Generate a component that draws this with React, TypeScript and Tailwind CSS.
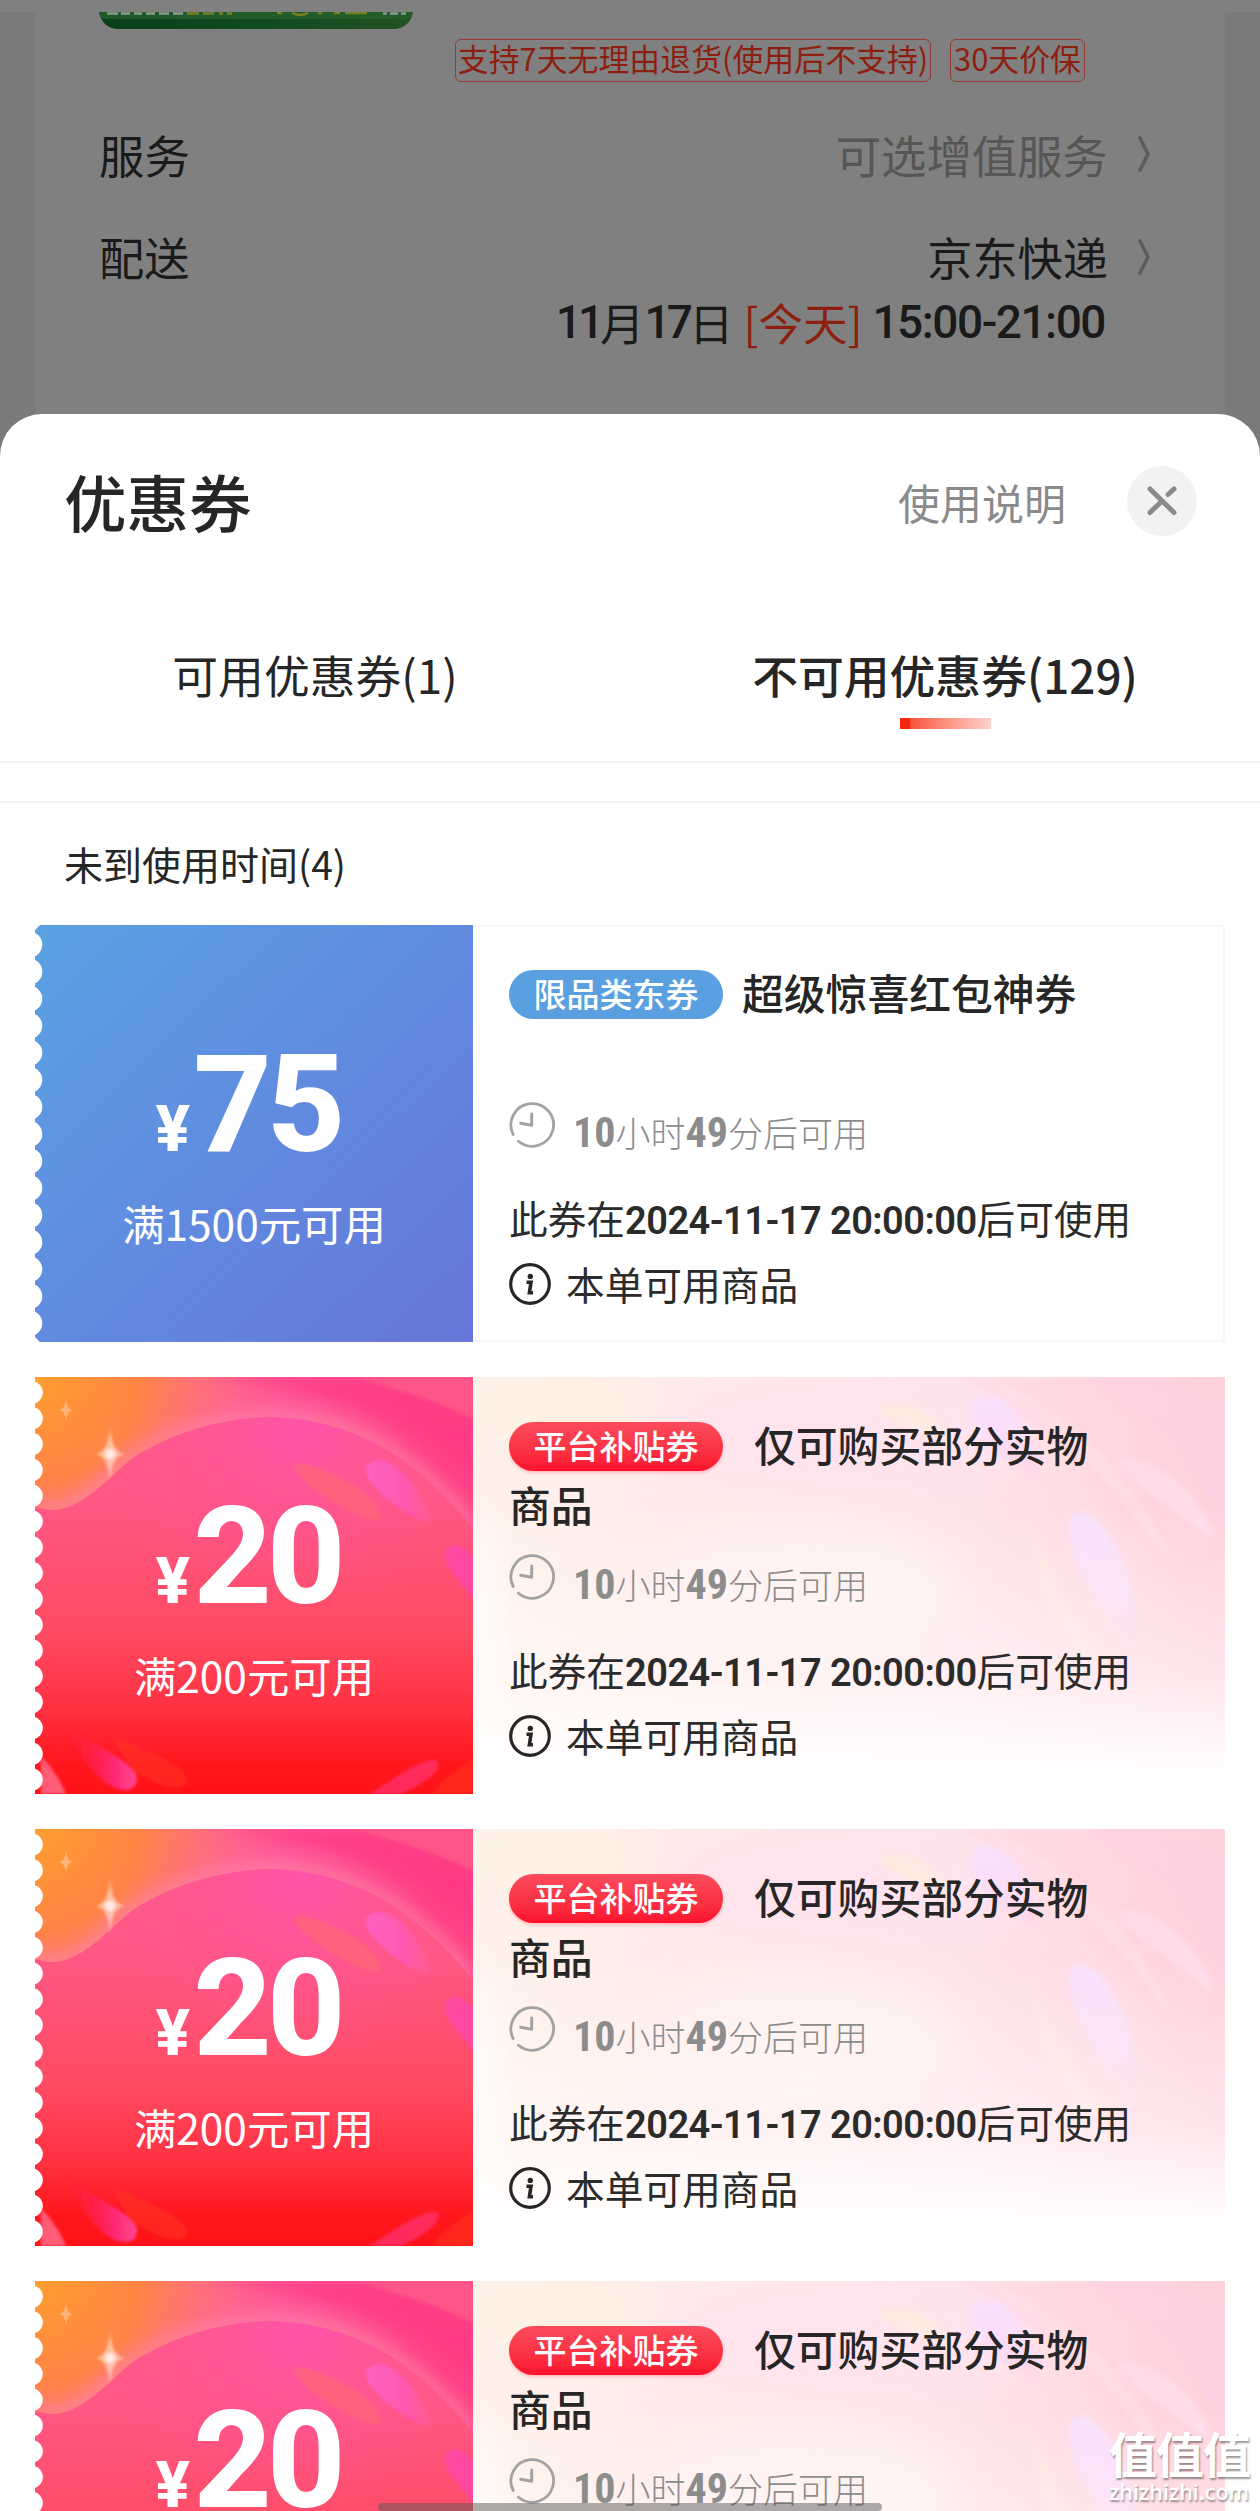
import { ReactNode } from 'react'

const COUPONS = [
  { id: 1, type: 'category', tag: '限品类东券', title: '超级惊喜红包神券', amount: 75, threshold: 1500 },
  { id: 2, type: 'subsidy', tag: '平台补贴券', title: '仅可购买部分实物商品', amount: 20, threshold: 200 },
  { id: 3, type: 'subsidy', tag: '平台补贴券', title: '仅可购买部分实物商品', amount: 20, threshold: 200 },
  { id: 4, type: 'subsidy', tag: '平台补贴券', title: '仅可购买部分实物商品', amount: 20, threshold: 200 },
]

type Coupon = (typeof COUPONS)[number]

// Digits used for times and dates
function Num({ children, className = '' }: { children: ReactNode; className?: string }) {
  return <span className={`font-['Roboto'] ${className}`}>{children}</span>
}

function ArrowRight() {
  return (
    <svg className="w-4 h-9 ml-[28px] shrink-0" viewBox="0 0 16 36" fill="none" stroke="#5c5c5c" strokeWidth="3.6" strokeLinecap="round" strokeLinejoin="round">
      <path d="M4 2 12 18 4 34" />
    </svg>
  )
}

function ClockIcon() {
  return (
    <svg className="w-[46px] h-[46px] shrink-0" viewBox="0 0 46 46" fill="none" stroke="#a3a3a3" strokeWidth="2.8" strokeLinecap="round" strokeLinejoin="round">
      <path d="M4.2 32.5A21.3 21.3 0 1 1 9.5 39.2" />
      <path d="M22.7 12v11.2l-11-2" strokeWidth="3" />
    </svg>
  )
}

function InfoIcon() {
  return (
    <svg className="w-[42px] h-[42px] shrink-0" viewBox="0 0 42 42" fill="none" stroke="#262626">
      <circle cx="21" cy="21" r="19.3" strokeWidth="3.2" />
      <circle cx="21.3" cy="13.4" r="2.7" fill="#262626" stroke="none" />
      <path d="M17.5 19.2H22l-1.6 10.6H24" strokeWidth="3.6" />
    </svg>
  )
}

function CloseIcon() {
  return (
    <svg className="w-[70px] h-[70px]" viewBox="0 0 70 70" fill="none" stroke="#8a8a8a" strokeWidth="5" strokeLinecap="round">
      <path d="M23 23 47 46.5M23 46.5 34.5 35.5M41 28.5 47 23" />
    </svg>
  )
}

function BlueArt() {
  return (
    <svg className="absolute inset-0 w-full h-full" viewBox="0 0 438 417">
      <defs>
        <linearGradient id="blue" x1="0" y1="0" x2="1" y2="1">
          <stop offset="0" stopColor="#5aa2e2" />
          <stop offset="0.55" stopColor="#6189df" />
          <stop offset="1" stopColor="#6775d9" />
        </linearGradient>
      </defs>
      <rect width="438" height="417" fill="url(#blue)" />
      {Array.from({ length: 15 }, (_, i) => (
        <circle key={i} cx="-5.5" cy={19.6 + i * 27.05} r="12.8" fill="#fff" />
      ))}
      <path d="M0 0h5L0 5zM0 417h5l-5-5z" fill="#fff" />
    </svg>
  )
}

function RedArt() {
  return (
    <svg className="absolute inset-0 w-full h-full" viewBox="0 0 438 417">
      <defs>
        <linearGradient id="red" x1="0" y1="0" x2="0" y2="1">
          <stop offset="0" stopColor="#ff5c94" />
          <stop offset="0.3" stopColor="#ff5884" />
          <stop offset="0.62" stopColor="#ff4a62" />
          <stop offset="0.8" stopColor="#ff3040" />
          <stop offset="0.93" stopColor="#ff161c" />
          <stop offset="1" stopColor="#ff1216" />
        </linearGradient>
        <linearGradient id="band" x1="0" y1="0" x2="1" y2="0.3">
          <stop offset="0" stopColor="#ff8250" />
          <stop offset="0.3" stopColor="#ff7480" />
          <stop offset="0.55" stopColor="#ff5a9a" />
          <stop offset="1" stopColor="#ff4286" />
        </linearGradient>
        <radialGradient id="orange" cx="0" cy="0" r="0.48">
          <stop offset="0" stopColor="#ff9e30" />
          <stop offset="0.5" stopColor="#ff8640" stopOpacity="0.9" />
          <stop offset="1" stopColor="#ff6a80" stopOpacity="0" />
        </radialGradient>
        <radialGradient id="glow" cx="0.6" cy="0.12" r="0.45">
          <stop offset="0" stopColor="#ff54aa" />
          <stop offset="1" stopColor="#ff5488" stopOpacity="0" />
        </radialGradient>
        <linearGradient id="petal" x1="0" y1="0" x2="1" y2="0">
          <stop offset="0" stopColor="#ff62c0" />
          <stop offset="0.6" stopColor="#ff58b0" />
          <stop offset="1" stopColor="#ff60a0" stopOpacity="0.4" />
        </linearGradient>
        <linearGradient id="petalLow" x1="0" y1="0" x2="1" y2="0">
          <stop offset="0" stopColor="#ff1c40" stopOpacity="0.1" />
          <stop offset="0.7" stopColor="#ff2a78" />
          <stop offset="1" stopColor="#ff4a90" />
        </linearGradient>
        <filter id="soft1" x="-20%" y="-20%" width="140%" height="140%"><feGaussianBlur stdDeviation="1.5" /></filter>
        <filter id="soft6" x="-20%" y="-20%" width="140%" height="140%"><feGaussianBlur stdDeviation="7" /></filter>
        <clipPath id="outer">
          <path d="M0 0H438V152C412 118 380 88 340 66C300 46 262 40 232 40C180 42 130 58 95 83C70 104 45 134 15 133L0 130Z" />
        </clipPath>
      </defs>
      <rect width="438" height="417" fill="url(#red)" />
      <rect width="438" height="417" fill="url(#glow)" />
      <g clipPath="url(#outer)">
        <rect width="438" height="160" fill="url(#band)" />
        <path d="M145 0C250 8 350 20 438 100V40C400 16 360 4 320 0Z" fill="#ff3a82" fillOpacity="0.8" filter="url(#soft6)" />
        <path d="M320 0C360 12 400 22 438 42V0Z" fill="#ff5488" filter="url(#soft1)" />
        <rect width="438" height="417" fill="url(#orange)" />
        <path d="M438 152C412 118 380 88 340 66C300 46 262 40 232 40C180 42 130 58 95 83C70 104 45 134 15 133L0 130" fill="none" stroke="#ff86a6" strokeWidth="18" strokeOpacity="0.6" filter="url(#soft6)" />
      </g>
      <g filter="url(#soft1)">
        <path d="M258 88C275 80 352 118 344 142C336 150 262 108 258 88Z" fill="#ff6478" fillOpacity="0.85" />
        <path d="M331 90C344 72 370 92 384 116C400 142 398 146 388 144C372 140 326 106 331 90Z" fill="url(#petal)" />
        <path d="M411 172C418 164 432 170 440 182V224C428 208 404 186 411 172Z" fill="#ff48a6" fillOpacity="0.9" />
        <path d="M32 345C40 362 96 380 102 400C102 420 80 414 66 402C48 386 36 366 32 345Z" fill="url(#petalLow)" />
        <path d="M76 356C100 372 156 386 152 406C140 418 112 402 96 392Z" fill="#ff3a24" fillOpacity="0.45" />
        <path d="M334 417C350 408 392 376 403 384C408 398 376 412 366 417Z" fill="#ff2c62" fillOpacity="0.9" />
        <path d="M438 382C424 390 404 406 398 417H438Z" fill="#ff3420" fillOpacity="0.6" />
        <path d="M6 380C14 386 26 404 31 417H6Z" fill="#ff5c78" />
      </g>
      <g fill="#fff">
        <path d="M75 48Q76 76 90 77Q76 78 75 106Q74 78 60 77Q74 76 75 48Z" fillOpacity="0.5" filter="url(#soft1)" />
        <circle cx="75" cy="77" r="5" fillOpacity="0.7" filter="url(#soft1)" />
        <path d="M31 22Q32 32 38 33Q32 34 31 44Q30 34 24 33Q30 32 31 22Z" fillOpacity="0.3" />
      </g>
      {Array.from({ length: 16 }, (_, i) => (
        <circle key={i} cx="-3.5" cy={15.5 + i * 25.8} r="11.3" fill="#fff" />
      ))}
    </svg>
  )
}

function PinkArt() {
  return (
    <svg className="absolute inset-0 w-full h-full" viewBox="0 0 752 417" preserveAspectRatio="none">
      <defs>
        <linearGradient id="pink" x1="0" y1="0" x2="1" y2="0">
          <stop offset="0" stopColor="#fff2ea" />
          <stop offset="0.3" stopColor="#ffeae9" />
          <stop offset="0.65" stopColor="#ffe4ea" />
          <stop offset="1" stopColor="#ffd2dc" />
        </linearGradient>
        <linearGradient id="fade" x1="0" y1="0" x2="0" y2="1">
          <stop offset="0.3" stopColor="#fff" stopOpacity="0" />
          <stop offset="0.72" stopColor="#fff" stopOpacity="0.45" />
          <stop offset="0.96" stopColor="#fff" />
        </linearGradient>
        <linearGradient id="lilac" x1="0" y1="0" x2="0" y2="1">
          <stop offset="0" stopColor="#f9e2fe" />
          <stop offset="0.6" stopColor="#fcdcf6" />
          <stop offset="1" stopColor="#ffd0e4" stopOpacity="0.4" />
        </linearGradient>
        <filter id="soft3" x="-20%" y="-20%" width="140%" height="140%"><feGaussianBlur stdDeviation="3" /></filter>
        <filter id="soft20" x="-40%" y="-60%" width="180%" height="220%"><feGaussianBlur stdDeviation="22" /></filter>
      </defs>
      <rect width="752" height="417" fill="url(#pink)" />
      <ellipse cx="380" cy="60" rx="190" ry="50" fill="#ffe3ee" filter="url(#soft20)" />
      <ellipse cx="90" cy="30" rx="90" ry="20" fill="#fff3e0" filter="url(#soft20)" />
      <ellipse cx="330" cy="210" rx="150" ry="70" fill="#fff0ef" filter="url(#soft20)" />
      <ellipse cx="-10" cy="260" rx="26" ry="120" fill="#fff" filter="url(#soft20)" />
      <g filter="url(#soft3)">
        <path d="M490 0C600 60 690 170 752 330V0Z" fill="#ffcfdd" fillOpacity="0.4" />
        <path d="M520 0C610 46 670 110 700 190C650 120 590 50 500 0Z" fill="#ffe6ec" fillOpacity="0.5" />
        <path d="M610 0C690 40 730 90 752 160V30C720 14 690 4 670 0Z" fill="#ffd0e4" fillOpacity="0.7" />
        <path d="M640 80C690 80 730 120 742 165C700 130 660 110 640 80Z" fill="#ffdcea" />
        <path d="M407 28C430 16 470 38 476 66C450 56 410 48 407 28Z" fill="#ffeae2" />
        <path d="M499 30C502 10 530 12 548 44C566 76 574 96 562 100C540 90 494 60 499 30Z" fill="url(#lilac)" />
        <path d="M597 142C606 124 636 146 650 184C664 224 670 260 660 276C640 246 588 180 597 142Z" fill="url(#lilac)" />
        <path d="M555 140C570 180 600 250 640 300C590 270 560 210 555 140Z" fill="#ffe8e0" fillOpacity="0.6" />
      </g>
      <rect width="752" height="417" fill="url(#fade)" />
    </svg>
  )
}

function CouponCard({ coupon }: { coupon: Coupon }) {
  const subsidy = coupon.type === 'subsidy'

  return (
    <div className="flex h-[417px] shrink-0">
      {/* Amount */}
      <div className="relative w-[438px] shrink-0">
        {subsidy ? <RedArt /> : <BlueArt />}
        <div className="relative flex flex-col items-center text-white pt-[112px]">
          <div className="flex items-baseline h-[136px] mr-3 leading-[136px] font-['Roboto'] font-extrabold">
            <span className="w-[38px] text-[64px]">¥</span>
            <span className="text-[136px] tracking-[-5px]">{coupon.amount}</span>
          </div>
          <div className="mt-[20px] text-[42.4px] leading-[60px]">满{coupon.threshold}元可用</div>
        </div>
      </div>

      {/* Details */}
      <div className={`relative flex-1 ${subsidy ? '' : 'border-2 border-l-0 border-[#f7f7f7]'}`}>
        {subsidy && <PinkArt />}
        <div className={`relative pl-9 ${subsidy ? 'pt-[37px]' : 'pt-[35px]'}`}>
          <div className="w-[615px] h-[120px] text-[41.8px] leading-[60px] font-medium text-[#262626]">
            <span
              className={`inline-block text-center align-middle w-[214px] h-[49px] -mt-2 rounded-full text-[33px] leading-[47px] text-white ${
                subsidy ? 'mr-[31px] bg-linear-to-b from-[#fb4a5c] to-[#fb0f2c] shadow-[0_2px_3px_rgba(250,30,60,0.25)]' : 'mr-[19px] bg-[#5a9fe0]'
              }`}
            >
              {coupon.tag}
            </span>
            {coupon.title}
          </div>
          <div className="mt-[20px] flex h-[46px] text-[#8c8c8c]">
            <ClockIcon />
            <div className="ml-[18px] pt-[5px] text-[35px] leading-[50px] font-light">
              <Num className="text-[42px] font-bold font-stretch-75%">10</Num>小时
              <Num className="text-[42px] font-bold font-stretch-75%">49</Num>分后可用
            </div>
          </div>
          <div className="mt-[44px] text-[38.7px] leading-[50px] text-[#2b2b2b]">
            此券在<Num className="text-[38px] font-semibold tracking-[-0.55px]">2024-11-17 20:00:00</Num>后可使用
          </div>
          <div className="mt-[17px] flex items-center h-[42px] text-[38.7px] leading-[42px] text-[#2b2b2b]">
            <InfoIcon />
            <span className="ml-[15px] -mt-[3px]">本单可用商品</span>
          </div>
        </div>
      </div>
    </div>
  )
}

// Order page seen through the dimmed overlay
function OrderBackdrop() {
  return (
    <div className="h-[456px] bg-[#7a7a7a] text-[#1a1a1a]">
      <div className="h-3 bg-[#808080]" />
      <div className="h-[444px] mx-[35px] pl-16 pr-[73px] bg-[#808080]">
        <svg className="block w-[314px] h-[17px]" viewBox="0 0 314 17">
          <defs>
            <linearGradient id="green" x1="0" y1="0" x2="1" y2="0">
              <stop offset="0" stopColor="#0a3f1c" />
              <stop offset="0.5" stopColor="#0f4a22" />
              <stop offset="1" stopColor="#235224" />
            </linearGradient>
          </defs>
          <path d="M0 0H314C312 10 306 17 294 17H20C8 17 2 10 0 0Z" fill="url(#green)" />
          <path d="M0 0H314L310 7H3Z" fill="#26602c" fillOpacity="0.8" />
          <path d="M8 1.5h11m3 0h9m4 0h8m4 0h9m4 0h10m4 0h10" stroke="#8d9a8d" strokeWidth="2.4" />
          <path d="M88 1.5h12m4 0h11m5 0h4m4 0h5M178 1h5m10 0q9 4 16 0m10 0h4m12 0h6m5 0h22" stroke="#7c7f22" strokeWidth="2.4" fill="none" />
          <path d="M284 1.5h4m3 0h8m3 0h5" stroke="#8d9a8d" strokeWidth="2.4" />
        </svg>
        <div className="mt-[10px] mr-[67px] flex justify-end gap-[19px] h-[43px] text-[30.9px] leading-[36px] text-[#8c1f10] whitespace-nowrap">
          <span className="flex justify-center w-[476px] border border-[#993a30] rounded-md">支持7天无理由退货(使用后不支持)</span>
          <span className="flex justify-center w-[135px] border border-[#993a30] rounded-md">30天价保</span>
        </div>
        <div className="mt-[42px] flex items-center h-[60px] text-[45.4px]">
          <span>服务</span>
          <span className="ml-auto text-[#565656]">可选增值服务</span>
          <ArrowRight />
        </div>
        <div className="mt-[43px] flex items-center h-[60px] text-[45.2px]">
          <span>配送</span>
          <span className="ml-auto">京东快递</span>
          <ArrowRight />
        </div>
        <div className="mr-[47px] mt-[5px] flex items-center justify-end h-[60px] text-[44.5px] whitespace-pre">
          <Num className="text-[46px] font-medium tracking-[-4px]">11</Num>月
          <Num className="text-[46px] font-medium tracking-[-4px]">17</Num>日
          <span className="text-[#8c1f10]"> [今天] </span>
          <Num className="text-[46px] font-medium tracking-[-1.5px]">15:00-21:00</Num>
        </div>
      </div>
    </div>
  )
}

export default function App() {
  return (
    <div className="relative w-[1260px] h-[2511px] overflow-hidden font-['Noto_Sans_CJK_SC','Noto_Sans',sans-serif]">
      <OrderBackdrop />

      {/* Coupon sheet */}
      <div className="relative -mt-[42px] h-[2097px] bg-white rounded-t-[42px] flex flex-col overflow-hidden text-[#262626]">
        <div className="flex items-center h-[174px] shrink-0 pl-16 pr-[63px]">
          <h1 className="text-[62.5px] leading-[70px] font-medium">优惠券</h1>
          <span className="ml-auto mr-[61px] text-[42px] text-[#8a8a8a]">使用说明</span>
          <button className="w-[70px] h-[70px] rounded-full bg-[#f2f2f2]" aria-label="关闭">
            <CloseIcon />
          </button>
        </div>

        <div className="flex h-[175px] shrink-0 pt-[56px] border-b-2 border-[#f2f2f2] text-[45.8px] leading-[60px]">
          <div className="flex-1 text-center">可用优惠券(1)</div>
          <div className="flex-1 text-center font-medium">
            不可用优惠券(129)
            <div className="mx-auto mt-[14px] flex w-[91px] h-[11px]">
              <div className="w-[10px] bg-[#f2270c]" />
              <div className="flex-1 bg-linear-to-r from-[#f5503a] to-[#fbd2ce]" />
            </div>
          </div>
        </div>
        <div className="h-10 shrink-0 border-b-2 border-[#f2f2f2]" />

        <div className="h-[122px] shrink-0 pl-16 text-[39px] leading-[120px]">未到使用时间(4)</div>
        <div className="flex flex-col gap-[35px] mx-[35px]">
          {COUPONS.map((coupon) => (
            <CouponCard key={coupon.id} coupon={coupon} />
          ))}
        </div>
      </div>

      {/* System gesture bar */}
      <div className="absolute left-[378px] bottom-0 w-[504px] h-2 rounded-full bg-[#5a5a5a]/50" />

      {/* Watermark */}
      <div className="absolute right-[9px] bottom-[6px] w-[142px] text-white [text-shadow:1px_2px_2px_rgba(0,0,0,0.4)]">
        <div className="text-[48px] leading-[54px] font-bold tracking-[-1px]">值值值</div>
        <div className="font-['Open_Sans'] text-[21.5px] leading-[26px] font-semibold">zhizhizhi.com</div>
      </div>
    </div>
  )
}
